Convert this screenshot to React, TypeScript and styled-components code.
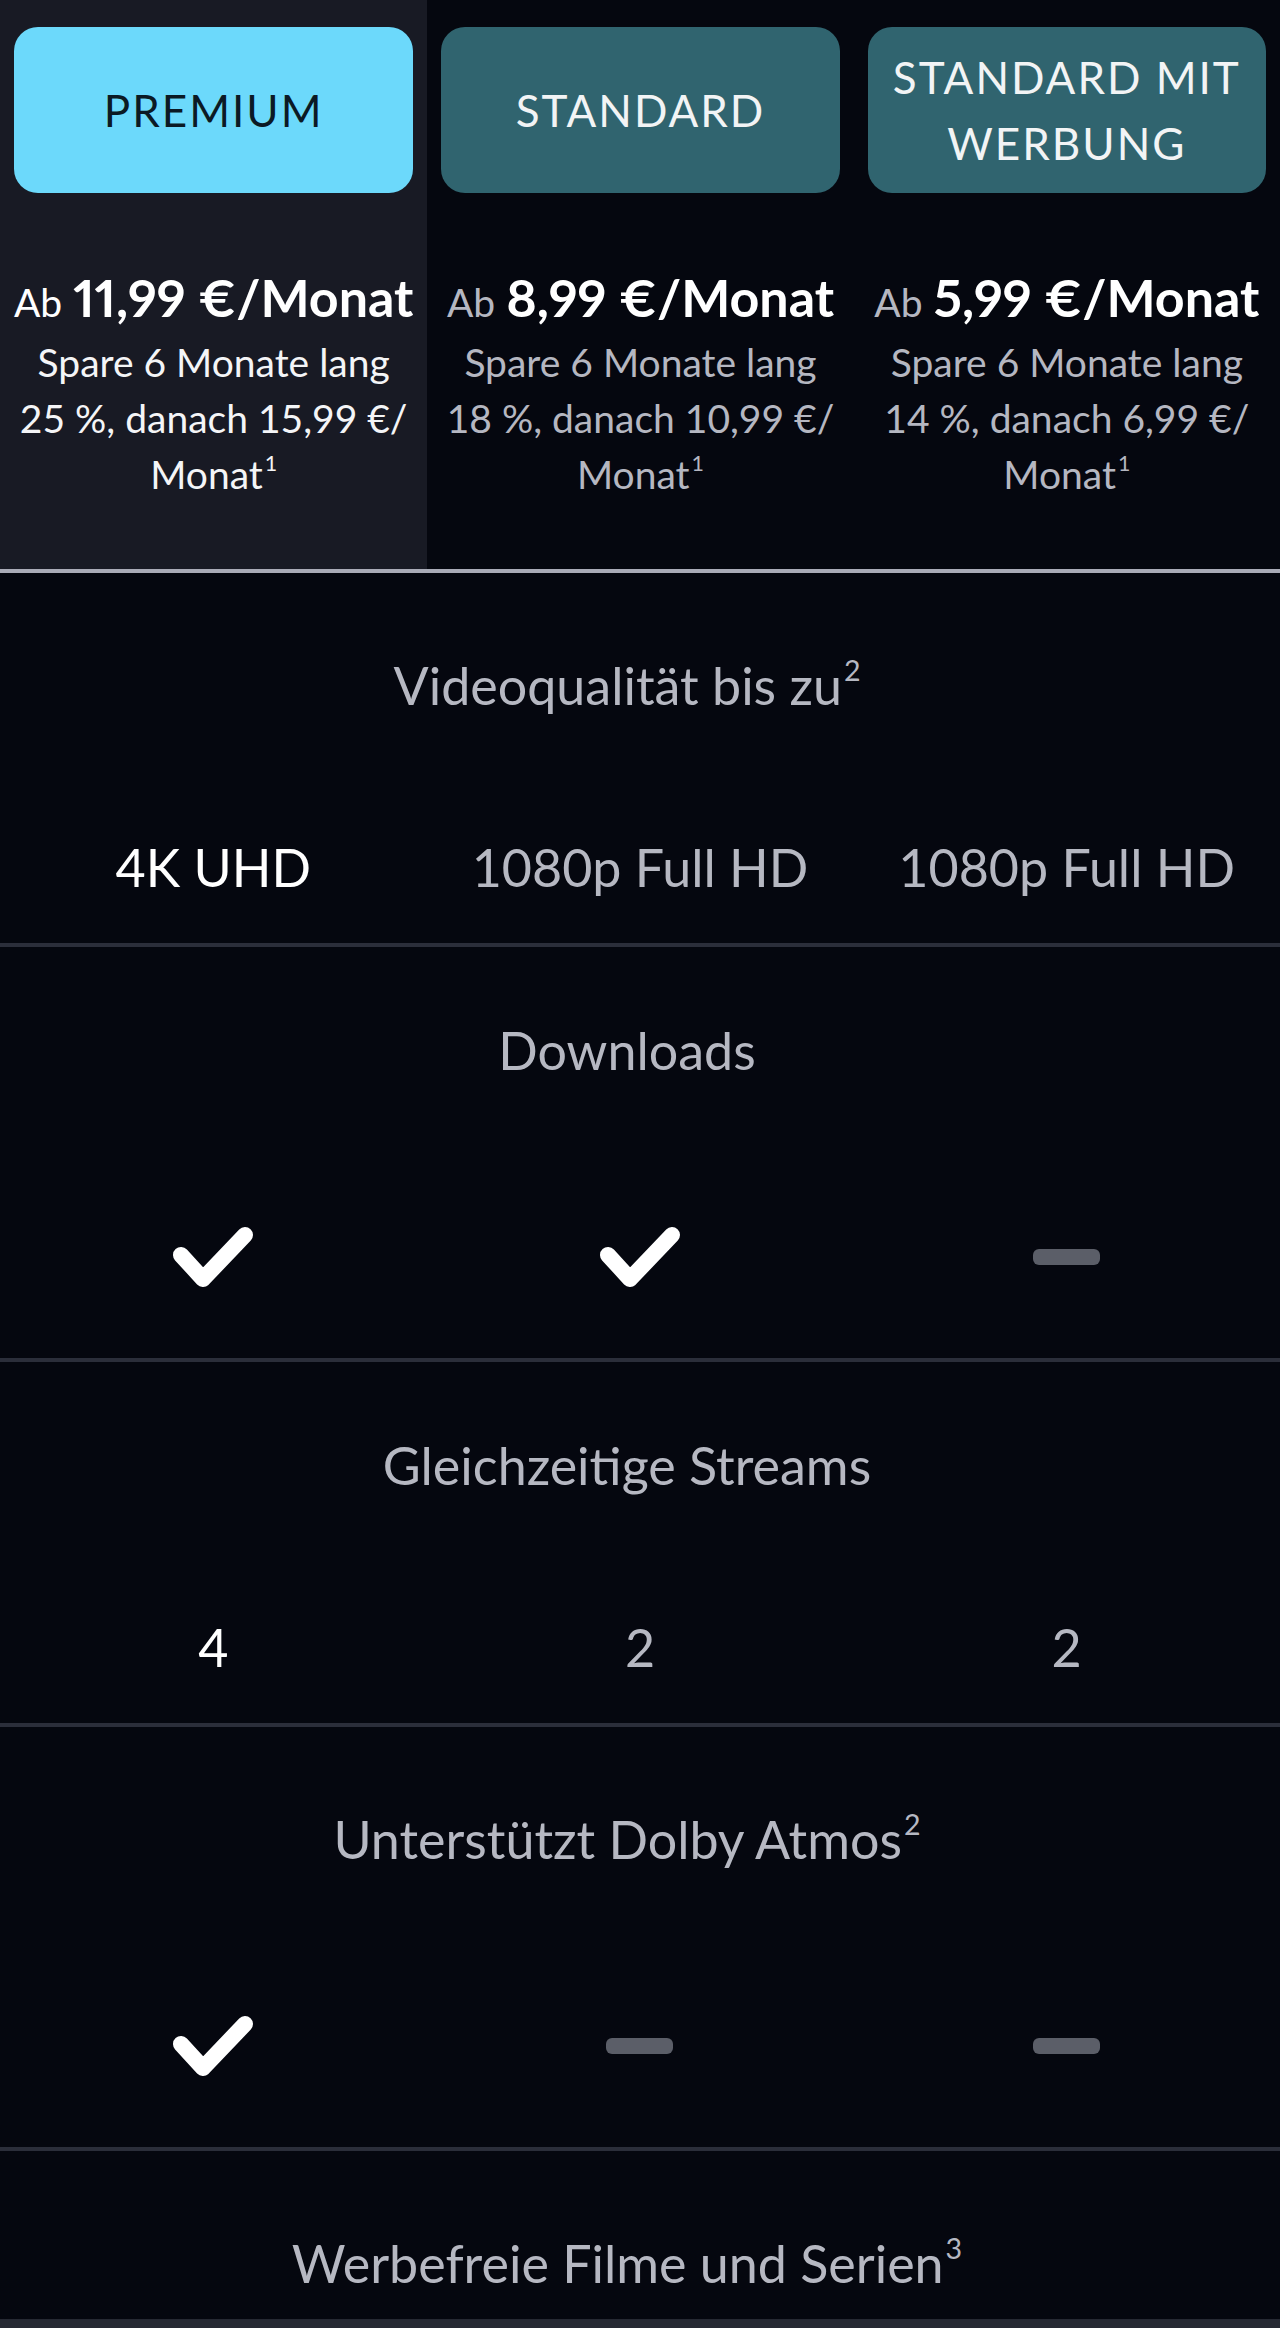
import styled, { createGlobalStyle } from 'styled-components'

const GlobalStyle = createGlobalStyle`
  html, body {
    margin: 0;
    padding: 0;
    background: #05070f;
  }
  body {
    font-family: Lato, "Open Sans", sans-serif;
    color: #f4f5f7;
  }
`

const Page = styled.main`
  width: 1280px;
  background: #05070f;
`

const PlanHeader = styled.section`
  display: grid;
  grid-template-columns: repeat(3, 1fr);
  border-bottom: 4px solid #a9abb7;
`

const PlanColumn = styled.div<{ $active?: boolean }>`
  background: ${p => (p.$active ? '#181a24' : 'transparent')};
  padding: 27px 14px 67px;
  display: flex;
  flex-direction: column;
  align-items: center;
  text-align: center;
`

const PlanButton = styled.button<{ $active?: boolean }>`
  width: 100%;
  height: 166px;
  border: none;
  border-radius: 24px;
  background: ${p => (p.$active ? '#6cd9fb' : '#30646f')};
  color: ${p => (p.$active ? '#0b1a24' : '#f2f4f5')};
  font-family: inherit;
  font-size: 44px;
  line-height: 66px;
  letter-spacing: 2px;
  text-transform: uppercase;
  display: flex;
  align-items: center;
  justify-content: center;
  padding: 0 20px;
`

const PriceLine = styled.div<{ $active?: boolean }>`
  margin-top: 74px;
  white-space: nowrap;
  line-height: 60px;
  font-size: 52px;
  font-weight: 700;
  font-variant-numeric: proportional-nums;
  color: #ffffff;

  span {
    font-size: 39px;
    font-weight: 400;
    margin-right: 11px;
    color: ${p => (p.$active ? '#ffffff' : '#b5b7c1')};
  }
`

const Savings = styled.p<{ $active?: boolean }>`
  margin: 2px 0 0;
  font-size: 39px;
  line-height: 56px;
  color: ${p => (p.$active ? '#f4f5f7' : '#b5b7c1')};
`

const Sup = styled.sup`
  font-size: 0.55em;
  line-height: 0;
  vertical-align: 0;
  position: relative;
  top: -0.85em;
  margin-left: 2px;
`

const FeatureRow = styled.section<{ $noted?: boolean }>`
  padding: ${p => (p.$noted ? '81px' : '72px')} 0 45px;
  border-bottom: 4px solid #2b2e3a;
`

const FeatureTitle = styled.h2`
  margin: 0;
  padding-right: 26px;
  text-align: center;
  font-size: 52px;
  font-weight: 400;
  line-height: 62px;
  color: #b6b8c2;
`

const ValueGrid = styled.div`
  display: grid;
  grid-template-columns: repeat(3, 1fr);
  margin-top: 120px;
`

const ValueCell = styled.div<{ $active?: boolean; $icon?: boolean }>`
  height: ${p => (p.$icon ? '112px' : '62px')};
  display: flex;
  align-items: center;
  justify-content: center;
  font-size: 52px;
  line-height: 62px;
  color: ${p => (p.$active ? '#ffffff' : '#b6b8c2')};
`

const Dash = styled.span`
  display: block;
  width: 67px;
  height: 16px;
  border-radius: 6px;
  background: #5b5e68;
`

/* sticky action bar, only its top edge shows at the bottom of the viewport */
const StickyBar = styled.div`
  position: fixed;
  left: 0;
  right: 0;
  bottom: 0;
  height: 9px;
  background: #262933;
`

const Check = () => (
  <svg width="80" height="60" viewBox="0 0 80 60" aria-label="ja">
    <polyline
      points="8,28 30,52 72,8"
      fill="none"
      stroke="#ffffff"
      strokeWidth="16"
      strokeLinecap="round"
      strokeLinejoin="round"
    />
  </svg>
)

type Plan = {
  name: string
  price: string
  savings: string
  after: string
}

const plans: Plan[] = [
  { name: 'Premium', price: '11,99', savings: '25 %', after: '15,99' },
  { name: 'Standard', price: '8,99', savings: '18 %', after: '10,99' },
  { name: 'Standard mit Werbung', price: '5,99', savings: '14 %', after: '6,99' },
]

type Value = string | boolean

type Feature = {
  title: string
  note?: string
  values: Value[]
}

const features: Feature[] = [
  { title: 'Videoqualität bis zu', note: '2', values: ['4K UHD', '1080p Full HD', '1080p Full HD'] },
  { title: 'Downloads', values: [true, true, false] },
  { title: 'Gleichzeitige Streams', values: ['4', '2', '2'] },
  { title: 'Unterstützt Dolby Atmos', note: '2', values: [true, false, false] },
  { title: 'Werbefreie Filme und Serien', note: '3', values: [true, true, false] },
]

function App() {
  return (
    <Page>
      <GlobalStyle />
      <PlanHeader>
        {plans.map((plan, i) => (
          <PlanColumn key={plan.name} $active={i === 0}>
            <PlanButton $active={i === 0}>{plan.name}</PlanButton>
            <PriceLine $active={i === 0}>
              <span>Ab</span>
              {plan.price} €/Monat
            </PriceLine>
            <Savings $active={i === 0}>
              Spare 6 Monate lang<br />
              {plan.savings}, danach {plan.after} €/<br />
              Monat<Sup>1</Sup>
            </Savings>
          </PlanColumn>
        ))}
      </PlanHeader>

      {features.map(feature => (
        <FeatureRow key={feature.title} $noted={!!feature.note}>
          <FeatureTitle>
            {feature.title}
            {feature.note && <Sup>{feature.note}</Sup>}
          </FeatureTitle>
          <ValueGrid>
            {feature.values.map((value, i) => (
              <ValueCell key={i} $active={i === 0} $icon={typeof value === 'boolean'}>
                {typeof value === 'boolean' ? (value ? <Check /> : <Dash />) : value}
              </ValueCell>
            ))}
          </ValueGrid>
        </FeatureRow>
      ))}
      <StickyBar />
    </Page>
  )
}

export default App
